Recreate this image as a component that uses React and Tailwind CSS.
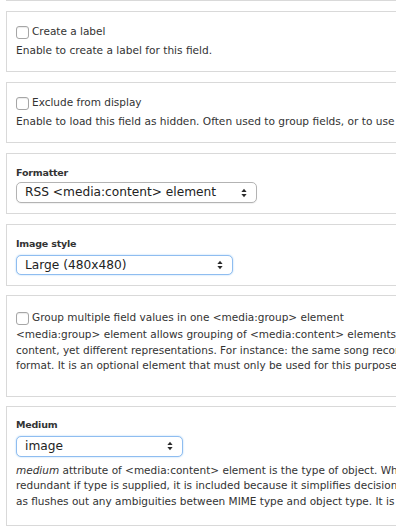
import React from "react";

const font = { fontFamily: '"DejaVu Sans", "Liberation Sans", sans-serif' };

function Checkbox() {
  return (
    <span className="inline-block w-[13px] h-[13px] rounded-[3px] border border-[#a6a6a6] bg-white shrink-0 shadow-[inset_0_1px_1px_rgba(0,0,0,0.08)]" />
  );
}

function Arrows() {
  return (
    <svg width="6" height="10" viewBox="0 0 6 10" className="shrink-0">
      <path d="M3 0.8 L5.6 4.1 L0.4 4.1 Z" fill="#2b2b2b" />
      <path d="M3 9.2 L5.6 5.9 L0.4 5.9 Z" fill="#2b2b2b" />
    </svg>
  );
}

function Select({ value, width, focused, height }) {
  return (
    <div
      className={
        "flex items-center justify-between rounded-[5px] bg-white pl-[8px] pr-[9px] text-[12.2px] text-[#222] whitespace-nowrap " +
        (focused
          ? "border border-[#8fbdf0] shadow-[0_0_2px_#a9d0f5]"
          : "border border-[#b3b3b3] shadow-[0_1px_1px_rgba(0,0,0,0.06)]")
      }
      style={{ width, height }}
    >
      <span>{value}</span>
      <Arrows />
    </div>
  );
}

export default function App() {
  return (
    <div
      className="w-[396px] h-[530px] overflow-hidden bg-white pl-[6px] text-[#333]"
      style={font}
    >
      <div className="h-px w-[700px] bg-[#d9d9d9]" />

      {/* Panel 1 */}
      <div className="mt-[10px] w-[700px] border border-[#d9d9d9] pl-[9px] pt-[11px] pb-[12px]">
        <div className="flex items-center h-[18px] gap-[3px] text-[10.5px] whitespace-nowrap">
          <Checkbox />
          <span>Create a label</span>
        </div>
        <div className="h-[18px] leading-[18px] text-[10.6px] whitespace-nowrap">
          Enable to create a label for this field.
        </div>
      </div>

      {/* Panel 2 */}
      <div className="mt-[10px] w-[700px] border border-[#d9d9d9] pl-[9px] pt-[11px] pb-[12px]">
        <div className="flex items-center h-[18px] gap-[3px] text-[10.5px] whitespace-nowrap">
          <Checkbox />
          <span>Exclude from display</span>
        </div>
        <div className="h-[18px] leading-[18px] text-[10.6px] whitespace-nowrap">
          Enable to load this field as hidden. Often used to group fields, or to use as token in another field.
        </div>
      </div>

      {/* Panel 3 */}
      <div className="mt-[10px] w-[700px] border border-[#d9d9d9] pl-[9px] pt-[10px] pb-[10px]">
        <div className="h-[18px] leading-[18px] text-[9.5px] font-bold tracking-[-0.2px] whitespace-nowrap">
          Formatter
        </div>
        <Select value="RSS <media:content> element" width={241} height={21} />
      </div>

      {/* Panel 4 */}
      <div className="mt-[10px] w-[700px] border border-[#d9d9d9] pl-[9px] pt-[10px] pb-[10px]">
        <div className="h-[18px] leading-[18px] text-[9.5px] font-bold tracking-[-0.2px] whitespace-nowrap">
          Image style
        </div>
        <div className="mt-[2px]">
          <Select value="Large (480x480)" width={217} height={20} focused />
        </div>
      </div>

      {/* Panel 5 */}
      <div className="mt-[9px] w-[700px] border border-[#d9d9d9] pl-[9px] pt-[13px] pb-[22px]">
        <div className="flex items-center h-[18px] gap-[3px] text-[10.5px] whitespace-nowrap">
          <Checkbox />
          <span>Group multiple field values in one &lt;media:group&gt; element</span>
        </div>
        <div className="leading-[15.5px] text-[10.5px] whitespace-nowrap">
          <div>&lt;media:group&gt; element allows grouping of &lt;media:content&gt; elements that are effectively the same</div>
          <div>content, yet different representations. For instance: the same song recorded in both the WAV and MP3</div>
          <div>format. It is an optional element that must only be used for this purpose.</div>
        </div>
      </div>

      {/* Panel 6 */}
      <div className="mt-[9px] w-[700px] border border-[#d9d9d9] pl-[9px] pt-[9px] pb-[16px]">
        <div className="h-[18px] leading-[18px] text-[9.5px] font-bold tracking-[-0.2px] whitespace-nowrap">
          Medium
        </div>
        <div className="mt-[2px]">
          <Select value="image" width={167} height={21} focused />
        </div>
        <div className="mt-[6px] leading-[15.5px] text-[10.5px] whitespace-nowrap">
          <div>
            <em>medium</em> attribute of &lt;media:content&gt; element is the type of object. While this attribute can at times seem
          </div>
          <div>redundant if type is supplied, it is included because it simplifies decision making on the reader side, as well</div>
          <div>as flushes out any ambiguities between MIME type and object type. It is an optional attribute.</div>
        </div>
      </div>
    </div>
  );
}
